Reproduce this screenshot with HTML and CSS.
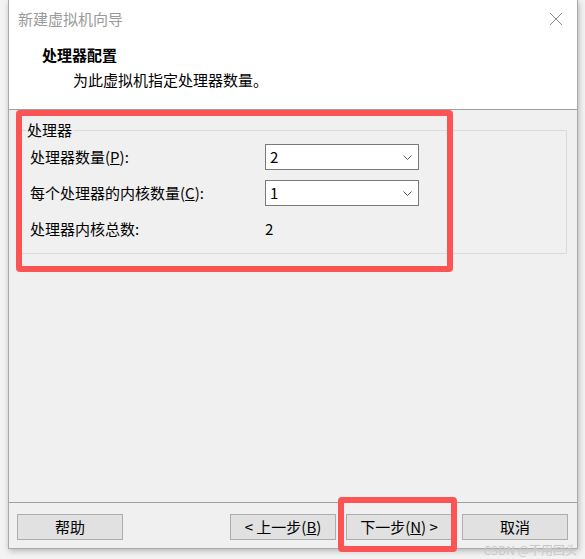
FILE: index.html
```html
<!DOCTYPE html>
<html lang="zh-CN">
<head>
<meta charset="utf-8">
<title>新建虚拟机向导</title>
<link rel="stylesheet" href="styles.css">
</head>
<body>
<div class="window">
  <div class="header">
    <div class="titlebar">
      <span class="title">新建虚拟机向导</span>
      <svg class="close" width="14" height="14" viewBox="0 0 14 14"><path d="M1 1 L13 13 M13 1 L1 13" stroke="#8a8a8a" stroke-width="1" fill="none"/></svg>
    </div>
    <div class="heading">处理器配置</div>
    <div class="subtitle">为此虚拟机指定处理器数量。</div>
  </div>
  <div class="content">
    <fieldset class="group">
      <legend>处理器</legend>
      <div class="row">
        <span class="label">处理器数量(<u>P</u>):</span>
        <div class="select"><span>2</span><svg width="9" height="5" viewBox="0 0 9 5"><path d="M0.5 0.5 L4.5 4.5 L8.5 0.5" stroke="#555" stroke-width="1" fill="none"/></svg></div>
      </div>
      <div class="row">
        <span class="label">每个处理器的内核数量(<u>C</u>):</span>
        <div class="select"><span>1</span><svg width="9" height="5" viewBox="0 0 9 5"><path d="M0.5 0.5 L4.5 4.5 L8.5 0.5" stroke="#555" stroke-width="1" fill="none"/></svg></div>
      </div>
      <div class="row">
        <span class="label">处理器内核总数:</span>
        <span class="value">2</span>
      </div>
    </fieldset>
  </div>
  <div class="footer">
    <button class="btn">帮助</button>
    <div class="spacer"></div>
    <button class="btn">&lt; 上一步(<u>B</u>)</button>
    <button class="btn">下一步(<u>N</u>) &gt;</button>
    <button class="btn">取消</button>
  </div>
  <div class="annot annot-group"></div>
  <div class="annot annot-next"></div>
</div>
<div class="watermark">CSDN @不用回头</div>
</body>
</html>
```

FILE: styles.css
```css
* { box-sizing: border-box; }
html, body { margin: 0; padding: 0; }
body {
  width: 585px;
  height: 559px;
  background: #f3f3f3;
  font-family: "Noto Sans CJK SC", "Microsoft YaHei", sans-serif;
  font-size: 15px;
  color: #000;
  position: relative;
  overflow: hidden;
}
.window {
  position: relative;
  margin-left: 8px;
  width: 570px;
  height: 549px;
  background: #f0f0f0;
  border: 1px solid #a9a9a9;
  border-top: none;
  display: flex;
  flex-direction: column;
  box-shadow: 1px 2px 6px rgba(0,0,0,0.25);
}
.header {
  background: #fff;
  height: 110px;
  border-bottom: 1px solid #a0a0a0;
  padding: 9px 0 0 9px;
}
.titlebar {
  display: flex;
  align-items: center;
  justify-content: space-between;
  height: 20px;
  line-height: 20px;
  padding-right: 14px;
}
.title { color: #9a9a9a; }
.close { display: block; }
.heading {
  margin-top: 16px;
  padding-left: 24px;
  font-weight: bold;
  line-height: 20px;
}
.subtitle {
  margin-top: 5px;
  padding-left: 55px;
  line-height: 20px;
}
.content {
  flex: 1;
  padding: 10px 10px 0 10px;
}
.group {
  margin: 0;
  border: 1px solid #dadada;
  padding: 4px 0 11px 10px;
  display: flex;
  flex-direction: column;
  gap: 10px;
}
.group legend {
  margin-left: -4px;
  padding: 0 1px;
  line-height: 20px;
}
.row {
  display: flex;
  align-items: center;
  height: 26px;
}
.label {
  width: 235px;
  line-height: 20px;
}
.select {
  width: 154px;
  height: 26px;
  background: #fff;
  border: 1px solid #7a7a7a;
  display: flex;
  align-items: center;
  justify-content: space-between;
  padding: 0 6px 0 4px;
  line-height: 20px;
}
.select svg { display: block; margin-right: 0; }
.value { line-height: 20px; }
.footer {
  height: 46px;
  border-top: 1px solid #a0a0a0;
  padding: 11px 9px 8px 8px;
  display: flex;
  gap: 10px;
}
.spacer { flex: 1; }
.btn {
  width: 106px;
  height: 26px;
  background: #e1e1e1;
  border: 1px solid #adadad;
  font: inherit;
  color: #000;
  line-height: 20px;
  padding: 0;
}
.annot {
  position: absolute;
  border: 6px solid #fc5454;
  border-radius: 4px;
}
.annot-group {
  left: 7px;
  top: 110px;
  width: 437px;
  height: 162px;
}
.annot-next {
  left: 329px;
  top: 497px;
  width: 119px;
  height: 55px;
}
.watermark {
  position: absolute;
  right: 8px;
  bottom: 2px;
  font-size: 12px;
  line-height: 14px;
  color: #c8c8c8;
  font-family: "Noto Sans CJK SC", sans-serif;
}
```
